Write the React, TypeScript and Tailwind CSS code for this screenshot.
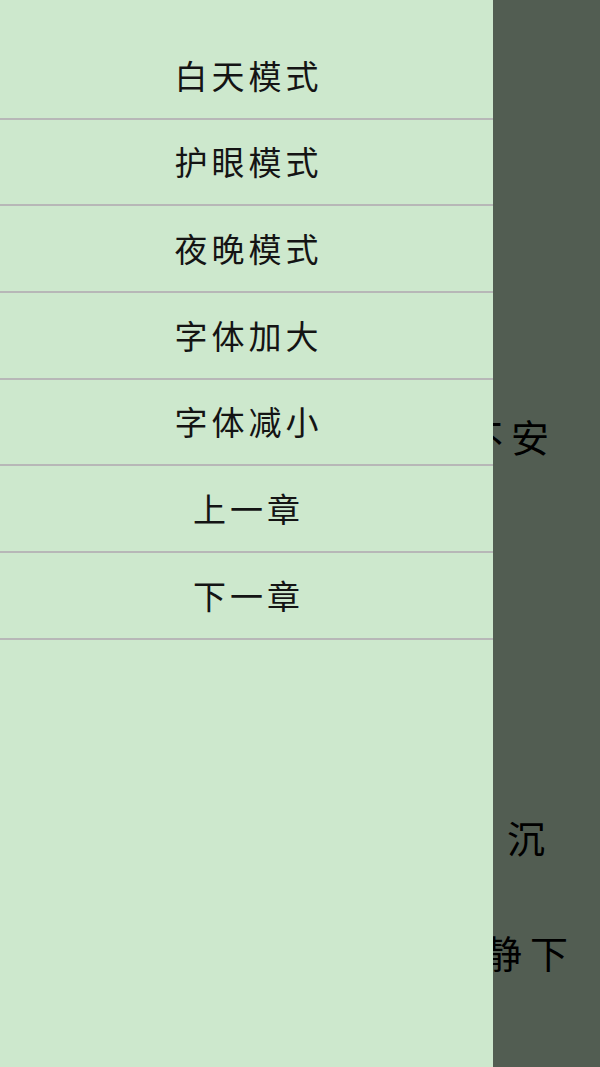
const menuItems = ["白天模式", "护眼模式", "夜晚模式", "字体加大", "字体减小", "上一章", "下一章"];

const cjk = { fontFamily: '"Noto Sans CJK SC", "Noto Sans", sans-serif' };

const App = () => {
  return (
    <div className="relative w-[600px] h-[1067px] overflow-hidden bg-[#cde8cd]" style={cjk}>
      {/* reading page underneath */}
      <div className="w-full h-full pt-[414px] text-[38px] leading-[44px] tracking-[8px] text-black">
        <p className="pl-[465px] whitespace-nowrap">不安</p>
        <p className="mt-[357px] pl-[507px] whitespace-nowrap">沉</p>
        <p className="mt-[71px] pl-[484px] whitespace-nowrap">静下</p>
      </div>

      {/* scrim */}
      <div className="absolute inset-0 bg-black/60" />

      {/* drawer */}
      <aside className="absolute left-0 top-0 bottom-0 w-[493px] bg-[#cde8cd] pt-[33px]">
        <ul>
          {menuItems.map((item) => (
            <li
              key={item}
              className="h-[86.67px] flex items-center justify-center border-b-2 border-[#b7b7b7] text-[33px] tracking-[4px] pl-[4px] text-[#141414]"
            >
              {item}
            </li>
          ))}
        </ul>
      </aside>
    </div>
  );
};

export default App;
